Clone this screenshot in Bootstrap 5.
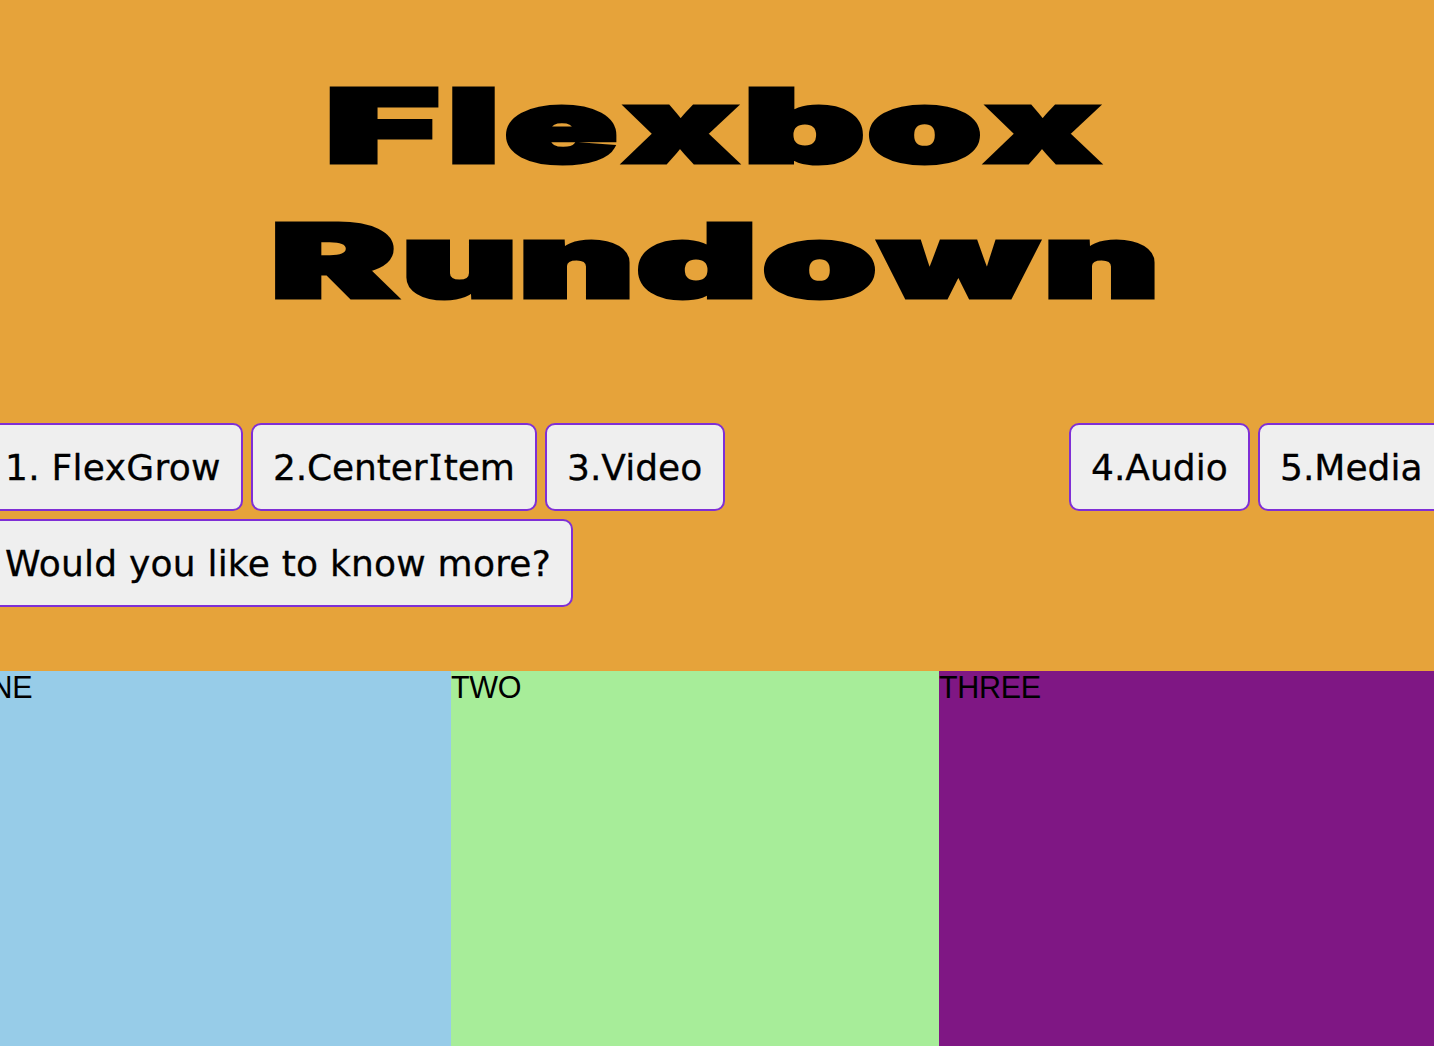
<!DOCTYPE html>
<html lang="en">
<head>
<meta charset="utf-8">
<meta name="viewport" content="width=device-width, initial-scale=1">
<title>Flexbox Rundown</title>
<link rel="stylesheet" href="https://cdn.jsdelivr.net/npm/bootstrap@5.3.0/dist/css/bootstrap.min.css">
<style>
body { background: #e6a33a; color: #000; font-family: "Liberation Sans", Arial, sans-serif; }
.page { height: 1046px; }
.hero { height: 423px; }
.hero svg { width: 1434px; height: 423px; }
.hero text { font: 900 100px Inter, sans-serif; fill: #000; stroke: #000; stroke-width: 5px; stroke-linejoin: miter; }
.nav-rows { height: 248px; gap: 8px; margin-left: -17px; margin-right: -20px; }
.demo-btn { height: 88px; padding: 2px 20px 0; border: 2px solid #7f2fd6; border-radius: 10px; background: #efefef; color: #000; font: 36px/82px "DejaVu Sans", Verdana, sans-serif; white-space: nowrap; text-align: left; -webkit-text-stroke: .3px #000; }
.b-grow { width: 260px; letter-spacing: .27px; } .b-center { width: 286px; letter-spacing: -.15px; } .b-video { width: 180px; }
.b-audio { width: 181px; } .b-media { width: 196px; } .b-more { width: 590px; letter-spacing: .22px; }
.serif-i { font-family: "Noto Sans", sans-serif; font-size: 37px; line-height: 1; margin: 0 2px; }
.boxes { margin-left: -33px; margin-right: -20px; font-size: 30.5px; line-height: 33px; letter-spacing: -.3px; }
.box-one { width: 484px; background: #97cce8; }
.box-two { width: 488px; background: #a7ed99; }
.box-three { background: #7f1784; }
</style>
<script src="https://cdn.jsdelivr.net/npm/bootstrap@5.3.0/dist/js/bootstrap.bundle.min.js"></script>
</head>
<body>
<div class="page d-flex flex-column overflow-hidden">
  <h1 class="hero m-0 flex-shrink-0">
    <svg class="d-block" viewBox="0 0 1434 423" role="img" aria-label="Flexbox Rundown">
      <text y="161.5"><tspan x="325.5" textLength="113" lengthAdjust="spacingAndGlyphs">F</tspan><tspan x="448" textLength="51" lengthAdjust="spacingAndGlyphs">l</tspan><tspan x="505" textLength="112" lengthAdjust="spacingAndGlyphs">e</tspan><tspan x="625.5" textLength="110" lengthAdjust="spacingAndGlyphs">x</tspan><tspan x="744" textLength="120" lengthAdjust="spacingAndGlyphs">b</tspan><tspan x="868" textLength="113" lengthAdjust="spacingAndGlyphs">o</tspan><tspan x="987.5" textLength="110" lengthAdjust="spacingAndGlyphs">x</tspan></text>
      <text y="296.5"><tspan x="271" textLength="125" lengthAdjust="spacingAndGlyphs">R</tspan><tspan x="402" textLength="115" lengthAdjust="spacingAndGlyphs">u</tspan><tspan x="519" textLength="115" lengthAdjust="spacingAndGlyphs">n</tspan><tspan x="637" textLength="120" lengthAdjust="spacingAndGlyphs">d</tspan><tspan x="763" textLength="113" lengthAdjust="spacingAndGlyphs">o</tspan><tspan x="881" textLength="155" lengthAdjust="spacingAndGlyphs">w</tspan><tspan x="1044" textLength="115" lengthAdjust="spacingAndGlyphs">n</tspan></text>
    </svg>
  </h1>
  <nav class="nav-rows d-flex flex-column flex-shrink-0">
    <div class="d-flex justify-content-between">
      <div class="d-flex gap-2">
        <button class="demo-btn b-grow">1. FlexGrow</button>
        <button class="demo-btn b-center">2.Center<span class="serif-i">I</span>tem</button>
        <button class="demo-btn b-video">3.Video</button>
      </div>
      <div class="d-flex gap-2">
        <button class="demo-btn b-audio">4.Audio</button>
        <button class="demo-btn b-media">5.Media</button>
      </div>
    </div>
    <div class="d-flex"><button class="demo-btn b-more">Would you like to know more?</button></div>
  </nav>
  <main class="boxes d-flex flex-grow-1">
    <div class="box-one flex-shrink-0">ONE</div>
    <div class="box-two flex-shrink-0">TWO</div>
    <div class="box-three flex-grow-1">THREE</div>
  </main>
</div>
</body>
</html>
